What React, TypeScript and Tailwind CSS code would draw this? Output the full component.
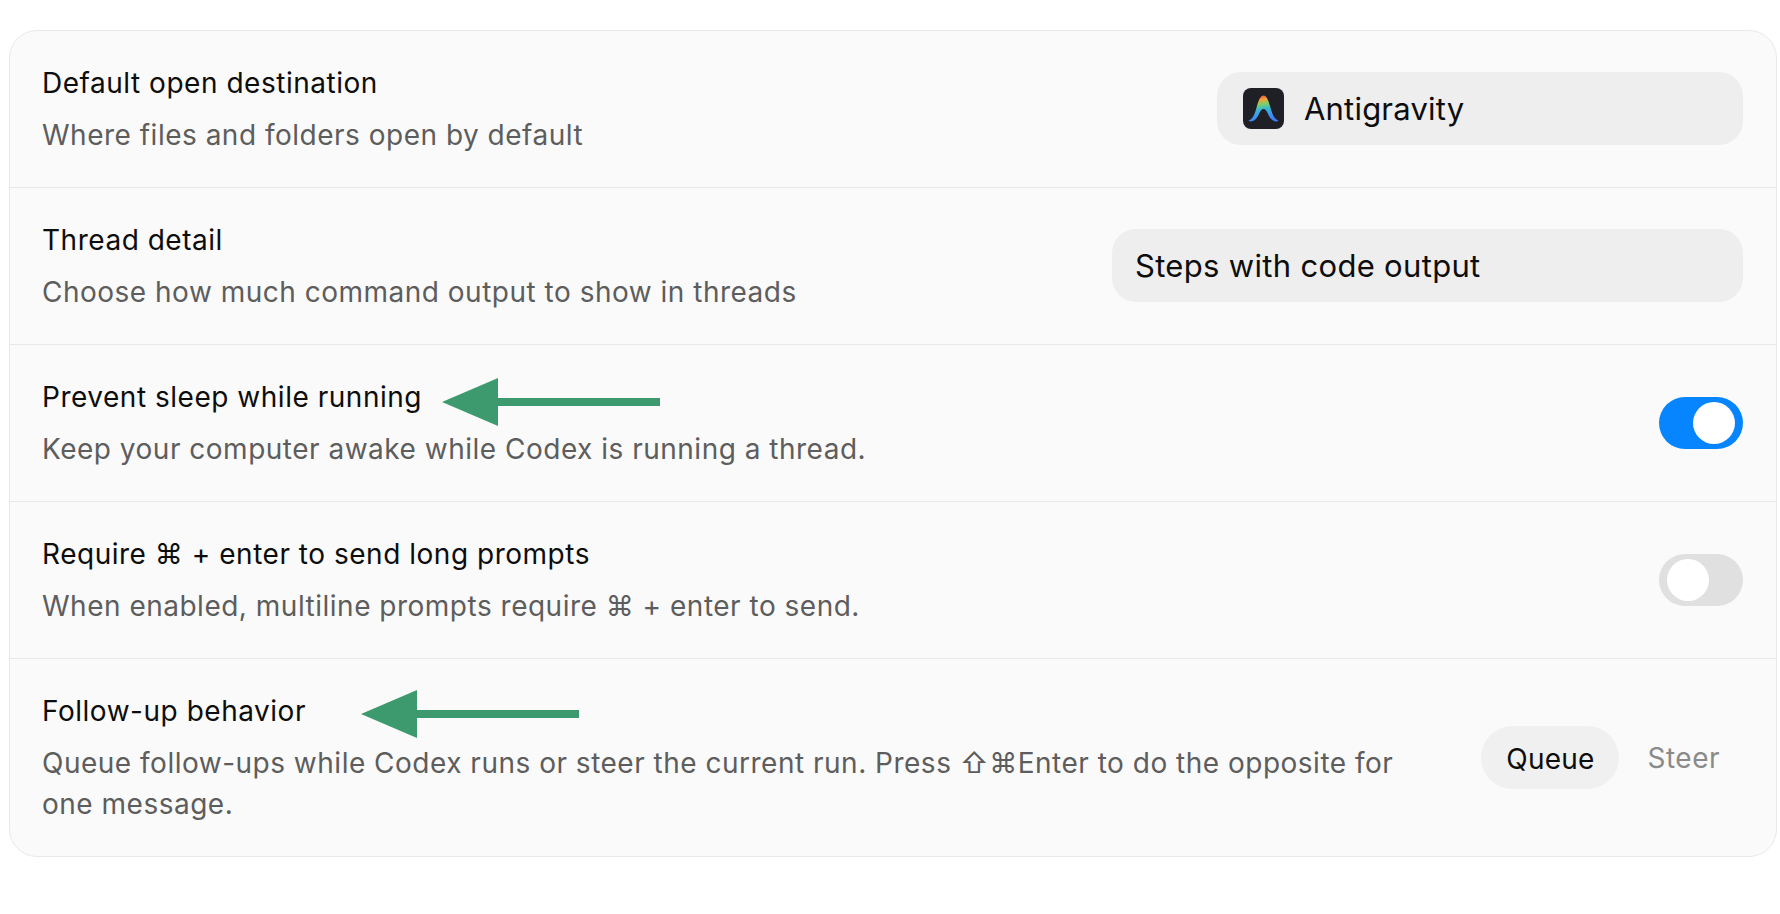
const font = "font-['Inter','DejaVu_Sans',sans-serif]";

function Arrow({ className }: { className: string }) {
  return (
    <svg className={className} width="218" height="48" viewBox="0 0 218 48" fill="#3d9a6f">
      <path d="M0 24 L56 0 L56 20 L218 20 L218 28 L56 28 L56 48 Z" />
    </svg>
  );
}

function AppLogo() {
  return (
    <svg width="41" height="41" viewBox="0 0 41 41" className="shrink-0">
      <defs>
        <linearGradient id="arch" x1="0.3" y1="0" x2="0.5" y2="1">
          <stop offset="0" stopColor="#f0483e" />
          <stop offset="0.18" stopColor="#f2a33a" />
          <stop offset="0.36" stopColor="#7ccf6a" />
          <stop offset="0.55" stopColor="#35b6d6" />
          <stop offset="0.8" stopColor="#3f8ff5" />
          <stop offset="1" stopColor="#3d7df5" />
        </linearGradient>
      </defs>
      <rect width="41" height="41" rx="8" fill="#1f2025" />
      <path
        d="M5.5 32.5 C10.5 31 12 25 14 18 C15.8 12 17.5 7.5 20.5 7.5 C23.5 7.5 25.2 12 27 18 C29 25 30.5 31 35.5 32.5 L34 33.5 C29.5 34 26.5 29.5 24.8 25.5 C23.5 22.5 22.3 21 20.5 21 C18.7 21 17.5 22.5 16.2 25.5 C14.5 29.5 11.5 34 7 33.5 Z"
        fill="url(#arch)"
      />
    </svg>
  );
}

function Toggle({ on }: { on: boolean }) {
  return (
    <div
      className={`flex h-[52px] w-[84px] shrink-0 items-center rounded-full px-[8px] ${
        on ? "justify-end bg-[#0685ff]" : "justify-start bg-[#e0e0e0]"
      }`}
    >
      <div className="size-[42px] rounded-full bg-white" />
    </div>
  );
}

function Row({
  title,
  desc,
  children,
  last,
}: {
  title: string;
  desc: string;
  children: React.ReactNode;
  last?: boolean;
}) {
  return (
    <div
      className={`flex items-center justify-between gap-[40px] pl-[32px] pr-[33px] ${
        last ? "" : "border-b border-[#e9e9e9]"
      }`}
    >
      <div className="min-w-0 flex-1 pb-[31px] pt-[34px]">
        <div className="text-[28px] leading-[36px] tracking-[0.52px] text-[#0d0d0d]">{title}</div>
        <div className="mt-[14px] text-[28px] leading-[41px] tracking-[0.5px] text-[#5d5d5d]">{desc}</div>
      </div>
      {children}
    </div>
  );
}

export default function App() {
  return (
    <div className={`relative min-h-[914px] bg-white px-[9px] pt-[30px] ${font}`}>
      <div className="w-[1768px] rounded-[28px] border border-[#e9e9e9] bg-[#fafafa]">
        <Row title="Default open destination" desc="Where files and folders open by default">
          <div className="mb-[1px] flex h-[73px] w-[526px] shrink-0 items-center gap-[20px] rounded-[24px] bg-[#eeeeee] px-[26px] text-[31px] tracking-[0.2px] text-[#0d0d0d]">
            <AppLogo />
            <span className="pt-[1px]">Antigravity</span>
          </div>
        </Row>
        <Row title="Thread detail" desc="Choose how much command output to show in threads">
          <div className="mb-[1px] flex h-[73px] w-[631px] shrink-0 items-center rounded-[24px] bg-[#eeeeee] px-[23px] pt-[1px] text-[31px] tracking-[0.32px] text-[#0d0d0d]">
            Steps with code output
          </div>
        </Row>
        <Row title="Prevent sleep while running" desc="Keep your computer awake while Codex is running a thread.">
          <Toggle on />
        </Row>
        <Row title="Require ⌘ + enter to send long prompts" desc="When enabled, multiline prompts require ⌘ + enter to send.">
          <Toggle on={false} />
        </Row>
        <Row
          last
          title="Follow-up behavior"
          desc="Queue follow-ups while Codex runs or steer the current run. Press ⇧⌘Enter to do the opposite for one message."
        >
          <div className="flex shrink-0 items-center text-[28px]">
            <div className="flex h-[63px] items-center rounded-full bg-[#f0f0f0] px-[25px] pt-[2px] tracking-[0.2px] text-[#0d0d0d]">Queue</div>
            <div className="flex h-[63px] items-center pl-[28px] pr-[23px] pt-[1px] tracking-[0.5px] text-[#8a8a8a]">Steer</div>
          </div>
        </Row>
      </div>
      <Arrow className="absolute left-[442px] top-[378px]" />
      <Arrow className="absolute left-[361px] top-[690px]" />
    </div>
  );
}
